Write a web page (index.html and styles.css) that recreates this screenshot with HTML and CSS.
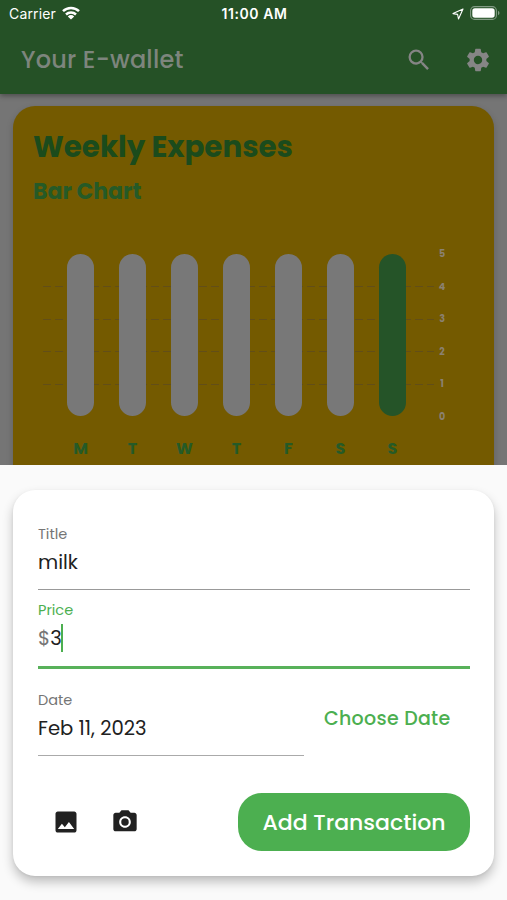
FILE: index.html
```html
<!DOCTYPE html>
<html lang="en">
<head>
<meta charset="utf-8">
<title>Your E-wallet</title>
<link rel="stylesheet" href="styles.css">
</head>
<body>
<div class="app">
  <header class="top">
    <div class="status">
      <div class="carrier"><span class="carrier-name">Carrier</span>
        <svg class="wifi" viewBox="0 0 18 14"><g fill="none" stroke="#fff" stroke-width="2.5"><path d="M1 5.2a11.5 11.5 0 0 1 16 0"/><path d="M4 8.5a7.3 7.3 0 0 1 10 0"/></g><path fill="#fff" d="M9 13.6 5.8 10.4a4.7 4.7 0 0 1 6.4 0z"/></svg>
      </div>
      <span class="clock">11:00 AM</span>
      <div class="power">
        <svg class="locate" viewBox="0 0 12 12"><path d="M11 1 1 5.6l4.6.8L6.500 11z" fill="none" stroke="#fff" stroke-width="1.1" stroke-linejoin="round"/></svg>
        <svg class="battery" viewBox="0 0 30 14"><rect x=".6" y=".6" width="25.800" height="12.800" rx="4" fill="none" stroke="#829b84" stroke-width="1.100"/><rect x="2.300" y="2.300" width="22.400" height="9.400" rx="2.600" fill="#fff"/><path d="M28 4.700q1.500.7 1.500 2.300T28 9.300z" fill="#829b84"/></svg>
      </div>
    </div>
    <div class="bar">
      <h1 class="app-title">Your E-wallet</h1>
      <div class="actions">
        <svg class="icon action" viewBox="0 0 24 24"><path d="M15.500 14h-.79l-.28-.27A6.470 6.470 0 0 0 16 9.500 6.500 6.500 0 1 0 9.500 16c1.610 0 3.090-.59 4.230-1.570l.27.28v.79l5 4.990L20.490 19l-4.990-5zm-6 0C7.010 14 5 11.990 5 9.500S7.010 5 9.500 5 14 7.010 14 9.500 11.990 14 9.500 14z"/></svg>
        <svg class="icon action" viewBox="0 0 24 24"><path d="M19.140 12.940c.04-.3.060-.61.060-.94s-.02-.64-.07-.94l2.030-1.580c.18-.14.230-.41.120-.61l-1.920-3.320c-.12-.22-.37-.29-.59-.22l-2.390.96c-.5-.38-1.030-.7-1.620-.94l-.36-2.540A.484.484 0 0 0 13.920 2.400h-3.840c-.24 0-.43.17-.47.41l-.36 2.540c-.59.24-1.130.57-1.620.94l-2.390-.96c-.22-.08-.47 0-.59.22L2.740 8.870c-.12.210-.08.470.12.610l2.030 1.580c-.05.3-.09.63-.09.94s.02.640.07.940l-2.030 1.580c-.18.140-.23.410-.12.610l1.920 3.320c.12.220.37.290.59.220l2.390-.96c.5.380 1.030.7 1.620.940l.36 2.540c.05.240.24.410.480.410h3.840c.24 0 .44-.17.470-.41l.36-2.540c.59-.24 1.130-.56 1.620-.94l2.390.96c.22.080.470 0 .59-.22l1.920-3.320c.12-.22.070-.47-.12-.61l-2.010-1.580zM12 15.600A3.610 3.610 0 0 1 8.400 12c0-1.980 1.620-3.600 3.600-3.600s3.600 1.620 3.600 3.600-1.620 3.600-3.600 3.600z"/></svg>
      </div>
    </div>
  </header>

  <main class="content">
    <section class="expenses">
      <h2 class="heading">Weekly Expenses</h2>
      <h3 class="subheading">Bar Chart</h3>
      <div class="chart">
        <div class="plot">
          <div class="day"><i class="pill"></i><span>M</span></div>
          <div class="day"><i class="pill"></i><span>T</span></div>
          <div class="day"><i class="pill"></i><span>W</span></div>
          <div class="day"><i class="pill"></i><span>T</span></div>
          <div class="day"><i class="pill"></i><span>F</span></div>
          <div class="day"><i class="pill"></i><span>S</span></div>
          <div class="day"><i class="pill today"></i><span>S</span></div>
        </div>
        <div class="scale"><span>5</span><span>4</span><span>3</span><span>2</span><span>1</span><span>0</span></div>
      </div>
    </section>
  </main>

  <section class="sheet">
    <form class="form">
      <div class="field title-field">
        <label class="label">Title</label>
        <div class="value">milk</div>
      </div>
      <div class="field price-field">
        <label class="label price-label">Price</label>
        <div class="value price"><span class="dollar">$</span><span>3</span><i class="caret"></i></div>
      </div>
      <div class="date-row">
        <div class="field date-field">
          <label class="label">Date</label>
          <div class="value">Feb 11, 2023</div>
        </div>
        <div class="choose"><span>Choose Date</span></div>
      </div>
      <div class="footer">
        <div class="media">
          <svg class="icon" viewBox="0 0 24 24"><path d="M21 19V5c0-1.100-.9-2-2-2H5c-1.100 0-2 .9-2 2v14c0 1.100.9 2 2 2h14c1.100 0 2-.9 2-2zM8.500 13.500l2.500 3.010L14.500 12l4.500 6H5l3.500-4.500z"/></svg>
          <svg class="icon" viewBox="0 0 24 24"><circle cx="12" cy="12" r="3.200"/><path d="M9 2 7.170 4H4c-1.100 0-2 .9-2 2v12c0 1.100.9 2 2 2h16c1.100 0 2-.9 2-2V6c0-1.100-.9-2-2-2h-3.170L15 2H9zm3 15c-2.760 0-5-2.240-5-5s2.240-5 5-5 5 2.240 5 5-2.240 5-5 5z"/></svg>
        </div>
        <button class="submit" type="button">Add Transaction</button>
      </div>
    </form>
  </section>
</div>
</body>
</html>
```
FILE: styles.css
```css
* { box-sizing: border-box; }
body { margin: 0; font-family: Poppins, Inter, sans-serif; }
h1, h2, h3 { margin: 0; }
.app { width: 507px; height: 900px; display: flex; flex-direction: column; overflow: hidden; background: #757575; }
.icon { width: 28px; height: 28px; display: block; fill: #212121; }

.top { height: 94px; flex: none; background: #255126; box-shadow: 0 2px 5px rgba(0,0,0,.35); z-index: 1; }
.status { height: 27px; display: grid; grid-template-columns: 1fr auto 1fr; align-items: center; padding: 0 7px 0 9px; color: #fff; font-family: Inter, sans-serif; font-size: 14px; }
.carrier { display: flex; align-items: center; gap: 6px; }
.carrier-name { letter-spacing: .15px; }
.wifi { width: 18px; height: 14px; margin-top: -1px; }
.clock { font-weight: 600; letter-spacing: .55px; }
.power { display: flex; align-items: center; justify-content: flex-end; gap: 6px; }
.locate { width: 12px; height: 12px; }
.battery { width: 30px; height: 14px; margin-top: -1px; }
.bar { height: 66px; display: flex; align-items: center; justify-content: space-between; padding: 0 15px 0 21px; }
.app-title { font-size: 24px; font-weight: 500; color: #7d857d; letter-spacing: .2px; line-height: 36px; }
.actions { display: flex; gap: 31px; }
.action { fill: #858585; }

.content { height: 371px; flex: none; padding: 12px 13px 0; overflow: hidden; }
.expenses { height: 400px; padding: 22px 20px 0; border-radius: 22px 22px 0 0; background: #745a00; box-shadow: 0 3px 7px rgba(0,0,0,.18); }
.heading { font-size: 29.300px; line-height: 38px; font-weight: 700; color: #1b4b1c; white-space: nowrap; }
.subheading { margin-top: 10px; font-size: 22px; line-height: 32px; font-weight: 700; color: #255a27; }
.chart { display: flex; margin: 46px 0 0 10px; }
.plot { width: 391px; height: 212px; display: flex; gap: 25px; padding-left: 24px;
  background:
    repeating-linear-gradient(90deg, transparent 0 8px, #745a00 8px 12px) 0 0 / 100% 100%,
    linear-gradient(#624e18, #624e18) 0 32px / 100% 1px no-repeat,
    linear-gradient(#624e18, #624e18) 0 65px / 100% 1px no-repeat,
    linear-gradient(#624e18, #624e18) 0 97px / 100% 1px no-repeat,
    linear-gradient(#624e18, #624e18) 0 130px / 100% 1px no-repeat; }
.day { width: 27px; text-align: center; font-size: 16px; line-height: 20px; font-weight: 700; color: #255a27; }
.pill { display: block; height: 162px; margin-bottom: 23px; border-radius: 14px; background: #787878; }
.today { background: #255428; }
.scale { display: flex; flex-direction: column; width: 16px; margin-top: -5px; height: 173px; justify-content: space-between; text-align: center; font-size: 9.500px; line-height: 10px; font-weight: 700; color: #8b8170; }

.sheet { flex: 1; padding: 25px 13px 0; background: #fafafa; }
.form { height: 386px; padding: 35px 24px 0 25px; border-radius: 22px; background: #fff; box-shadow: 0 6px 11px rgba(0,0,0,.24), 0 1px 3px rgba(0,0,0,.06); }
.field { border-bottom: 1px solid #999; }
.title-field { height: 65px; }
.label { display: block; font-size: 14.500px; line-height: 18px; color: #757575; }
.value { font-size: 19.600px; line-height: 28px; color: #212121; margin-top: 5px; white-space: nowrap; }
.price-field { height: 79px; padding-top: 11px; border-bottom: 3px solid #58b15a; }
.price-label { color: #4caf50; }
.price { display: flex; align-items: center; }
.dollar { color: #757575; }
.caret { width: 2px; height: 28px; margin-left: -1px; background: #4caf50; }
.date-row { display: flex; margin-top: 22px; }
.date-field { width: 266px; height: 65px; border-bottom-color: #aaa; }
.choose { flex: 1; padding: 14px 0 0 20px; font-size: 19px; line-height: 28px; font-weight: 500; letter-spacing: .3px; color: #4caf50; white-space: nowrap; }
.footer { display: flex; justify-content: space-between; align-items: center; margin-top: 37px; }
.media { display: flex; gap: 31px; padding-left: 14px; }
.submit { width: 232px; height: 58px; padding: 0; border: 0; border-radius: 24px; background: #4caf50; color: #fff; font-family: inherit; font-size: 22px; font-weight: 500; white-space: nowrap; }
```
